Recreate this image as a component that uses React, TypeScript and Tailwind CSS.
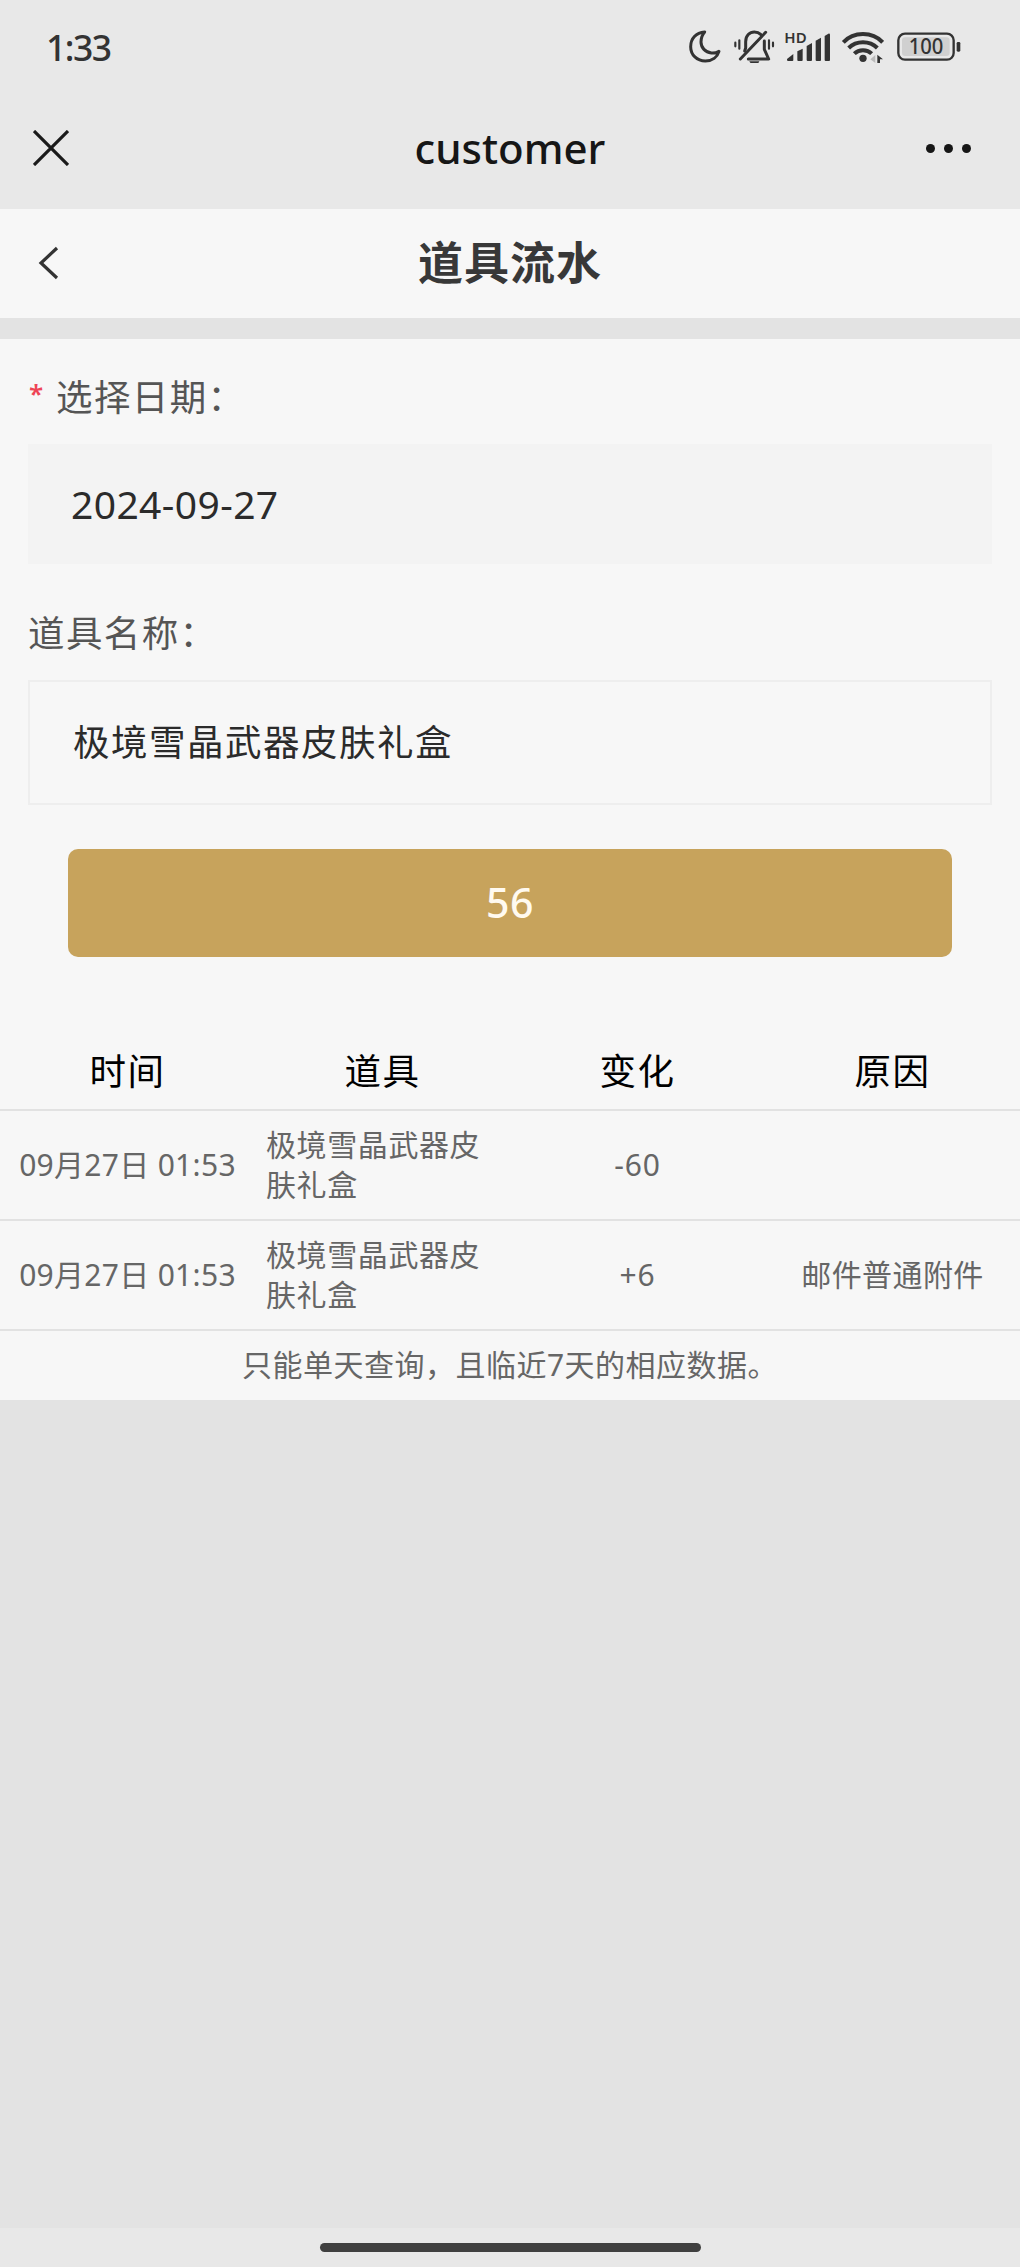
import type { ReactNode } from 'react';

type FlowRecord = {
  time: string;
  item: string;
  change: string;
  reason: string;
};

const columns = ['时间', '道具', '变化', '原因'];

const records: FlowRecord[] = [
  { time: '09月27日 01:53', item: '极境雪晶武器皮肤礼盒', change: '-60', reason: '' },
  { time: '09月27日 01:53', item: '极境雪晶武器皮肤礼盒', change: '+6', reason: '邮件普通附件' },
];

function MoonIcon() {
  return (
    <svg viewBox="54 50 102 110" className="w-[34px] h-[36.67px]" fill="none" stroke="#333" strokeWidth="9" strokeLinejoin="round">
      <path d="M104 65 C78 67 62 84 62 109 C62 134 81 152 106 152 C127 152 142 140 147 123 C140 127 132 129 124 128 C106 126 93 112 93 95 C93 83 97 73 104 65 Z" />
    </svg>
  );
}

function MutedBellIcon() {
  return (
    <svg viewBox="190 50 126 110" className="w-[42px] h-[36.67px]" fill="none" stroke="#333" strokeWidth="9" strokeLinecap="round" strokeLinejoin="round">
      <path d="M225 122 L228 113 V94 C228 76 240 65 254 65 C262 65 268 67 273 72" />
      <path d="M284 92 V117 L297 146 H236" />
      <path d="M212 146 L288 66" />
      <path d="M239 153 H269 C265 165 244 165 239 153 Z" fill="#333" stroke="none" />
      <path d="M197 97 V108 M209 90 V115 M298 90 V115 M310 97 V108" strokeWidth="6.5" />
    </svg>
  );
}

function SignalIcon() {
  return (
    <svg viewBox="343 50 143 110" className="w-[47.67px] h-[36.67px]" fill="#333">
      <text x="344" y="97" fontSize="43" fontWeight="600" fontFamily="Noto Sans, sans-serif" textLength="67" lengthAdjust="spacingAndGlyphs">HD</text>
      <path d="M352 146 L371 131 V149 Q371 152 368 152 H355 Q351 152 352 146 Z" />
      <path d="M383 123 L399 115 V149 Q399 152 396 152 H386 Q383 152 383 149 Z" />
      <path d="M411 107 L427 98 V149 Q427 152 424 152 H414 Q411 152 411 149 Z" />
      <path d="M438 91 L454 82 V149 Q454 152 451 152 H441 Q438 152 438 149 Z" />
      <path d="M465 77 L476 70 Q481 69 481 73 V149 Q481 152 478 152 H468 Q465 152 465 149 Z" />
    </svg>
  );
}

function WifiIcon() {
  return (
    <svg viewBox="514 50 130 110" className="w-[43.33px] h-[36.67px]" fill="none" stroke="#333" strokeWidth="12">
      <path d="M521 96 C552 63 608 63 639 96" />
      <path d="M537 113 C560 90 600 90 623 113" />
      <path d="M554 130 C568 116 592 116 606 130" />
      <circle cx="580" cy="144" r="11" fill="#333" stroke="none" />
      <path d="M602 147 L617 134 V158 Z" fill="#bbb" stroke="none" />
      <path d="M623 158 V133 L640 147 H631 V158 Z" fill="#333" stroke="none" />
    </svg>
  );
}

function BatteryIcon() {
  return (
    <svg viewBox="680 50 200 110" className="w-[66.67px] h-[36.67px]" fill="none">
      <rect x="687" y="70" width="166" height="78" rx="20" stroke="#333" strokeWidth="7" />
      <rect x="698" y="81" width="143" height="56" rx="10" fill="#d0d0d0" />
      <rect x="862" y="95" width="11" height="29" rx="4" fill="#333" />
      <text x="770" y="132" fontSize="65" fontWeight="500" fontFamily="Noto Sans, sans-serif" fill="#333" textAnchor="middle" textLength="104" lengthAdjust="spacingAndGlyphs">100</text>
    </svg>
  );
}

function StatusBar() {
  return (
    <div className="h-[96px] pl-[46px] pr-[57px] flex items-start justify-between">
      <div className="pt-[23px] text-[35.5px] leading-[48px] tracking-[-1.5px] font-medium text-[#333]">1:33</div>
      <div className="pt-[26.67px] flex">
        <MoonIcon />
        <div className="ml-[11.33px]"><MutedBellIcon /></div>
        <div className="ml-[9px]"><SignalIcon /></div>
        <div className="ml-[9.33px]"><WifiIcon /></div>
        <div className="ml-[12px]"><BatteryIcon /></div>
      </div>
    </div>
  );
}

function TitleBar() {
  return (
    <div className="h-[113px] px-[33px] pb-[9px] grid grid-cols-3 items-center">
      <svg viewBox="0 0 36 36" className="w-9 h-9" fill="none" stroke="#1a1a1a" strokeWidth="3.2">
        <path d="M1 1 L35 35 M35 1 L1 35" />
      </svg>
      <div className="text-center text-[42px] leading-[56px] font-medium text-[#161616]">customer</div>
      <div className="flex justify-end gap-[9px] pr-[16px]">
        <span className="w-[9px] h-[9px] rounded-full bg-[#161616]" />
        <span className="w-[9px] h-[9px] rounded-full bg-[#161616]" />
        <span className="w-[9px] h-[9px] rounded-full bg-[#161616]" />
      </div>
    </div>
  );
}

function PageHeader() {
  return (
    <div className="h-[109px] px-[37px] pb-[2px] grid grid-cols-3 items-center bg-[#f7f7f7]">
      <svg viewBox="0 0 22 36" className="w-[22px] h-9" fill="none" stroke="#333" strokeWidth="3.2">
        <path d="M20 3 L4 18 L20 33" />
      </svg>
      <h1 className="text-center text-[45px] leading-[60px] tracking-[1px] font-bold text-[#383838]">道具流水</h1>
    </div>
  );
}

function FieldLabel({ required, children }: { required?: boolean; children: ReactNode }) {
  return (
    <div className="flex h-[48px] items-center text-[36.5px] leading-[48px] tracking-[1.4px] text-[#555]">
      {required && <span className="w-[28px] pl-[1px] pb-[8px] text-[26px] font-semibold text-[#ee4455]">*</span>}
      {children}
    </div>
  );
}

export default function App() {
  return (
    <div className="flex h-[2267px] w-[1020px] flex-col bg-[#e3e3e3] font-['Noto_Sans','Noto_Sans_CJK_SC',sans-serif]">
      <div className="bg-[#e8e8e8]">
        <StatusBar />
        <TitleBar />
      </div>
      <PageHeader />

      <div className="mt-[21px] h-[1061px] bg-[#f7f7f7]">
        <div className="px-[28px] pt-[34px]">
          <FieldLabel required>选择日期：</FieldLabel>
          <div className="mt-[23px] h-[120px] px-[43px] flex items-center bg-[#f3f3f3] text-[39px] tracking-[0.4px] text-[#2b2b2b]">
            2024-09-27
          </div>
          <div className="mt-[45px]">
            <FieldLabel>道具名称：</FieldLabel>
          </div>
          <div className="mt-[23px] h-[125px] px-[43px] flex items-center border-2 border-[#eeeeee] text-[36.5px] tracking-[1.5px] text-[#2b2b2b]">
            极境雪晶武器皮肤礼盒
          </div>
          <button className="mt-[44px] mx-[40px] w-[884px] h-[108px] block rounded-[10px] bg-[#c7a35c] text-center text-[41px] tracking-[0.5px] font-medium text-[#fffaf0]">
            56
          </button>
        </div>

        <div className="mt-[78px] h-[76px] pb-[2px] grid grid-cols-4 items-center border-b-2 border-[#e2e2e2] text-center text-[36.5px] tracking-[1.4px] text-black">
          {columns.map((name) => (
            <div key={name}>{name}</div>
          ))}
        </div>
        {records.map((record, i) => (
          <div key={i} className="h-[110px] grid grid-cols-4 items-center border-b-2 border-[#e2e2e2] text-center text-[30px] leading-[40px] text-[#666]">
            <div className="whitespace-nowrap tracking-[0.3px]">{record.time}</div>
            <div className="pl-[11px] pr-[20px] text-left tracking-[0.6px]">{record.item}</div>
            <div className="tracking-[0.8px]">{record.change}</div>
            <div className="tracking-[0.4px]">{record.reason}</div>
          </div>
        ))}
        <div className="h-[69px] pb-[3px] flex items-center justify-center text-[30px] tracking-[0.5px] text-[#666]">
          只能单天查询，且临近7天的相应数据。
        </div>
      </div>

      {/* system gesture bar */}
      <div className="mt-auto h-[39px] pt-[15px] bg-[#e8e8e8]">
        <div className="mx-auto w-[381px] h-[9px] rounded-full bg-[#404040]" />
      </div>
    </div>
  );
}
